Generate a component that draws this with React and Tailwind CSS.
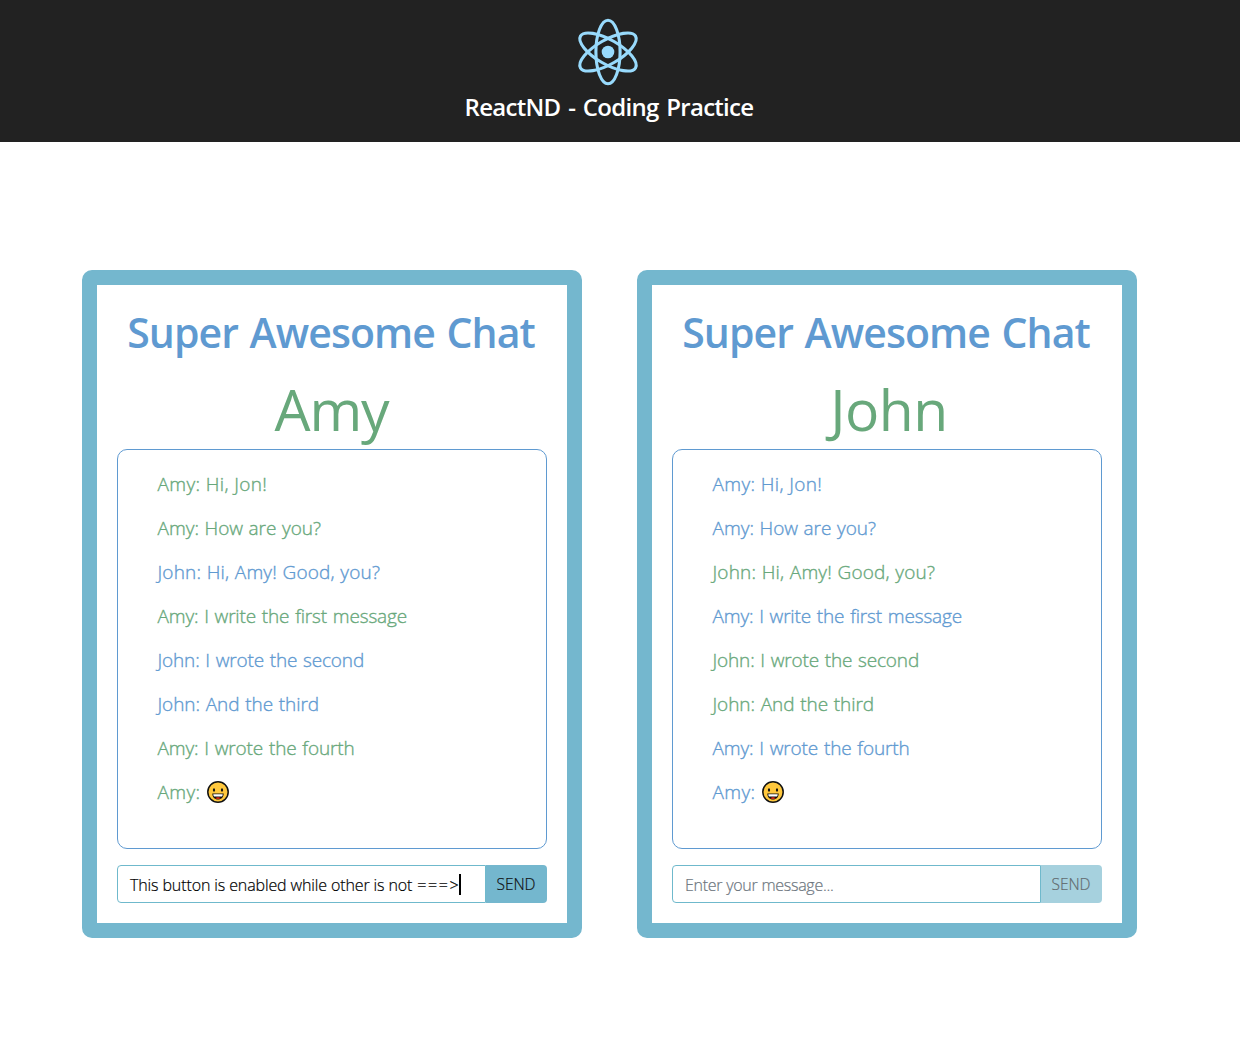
const MESSAGES = [
  { from: "Amy", text: "Hi, Jon!", spacing: "tracking-[0.37px]" },
  { from: "Amy", text: "How are you?", spacing: "tracking-[0.02px] [word-spacing:0.5px]" },
  { from: "John", text: "Hi, Amy! Good, you?", spacing: "tracking-[0.18px] [word-spacing:0.4px]" },
  { from: "Amy", text: "I write the first message", spacing: "tracking-[-0.15px] [word-spacing:1px]" },
  { from: "John", text: "I wrote the second", spacing: "tracking-[-0.14px] [word-spacing:0.9px]" },
  { from: "John", text: "And the third", spacing: "tracking-[-0.07px] [word-spacing:0.9px]" },
  { from: "Amy", text: "I wrote the fourth", spacing: "tracking-[-0.13px] [word-spacing:1px]" },
  { from: "Amy", text: null, spacing: "tracking-[0.4px]" },
];

function Logo() {
  return (
    <svg className="mr-0.5 h-[68px] w-[68px]" viewBox="-34 -34 68 68" fill="none" stroke="#98dafc" strokeWidth="3.1">
      <ellipse rx="12.1" ry="31.8" />
      <ellipse rx="12.1" ry="31.8" transform="rotate(60)" />
      <ellipse rx="12.1" ry="31.8" transform="rotate(-60)" />
      <circle r="6.3" fill="#98dafc" stroke="none" />
    </svg>
  );
}

function Grin() {
  return (
    <svg className="ml-1.5 h-[22px] w-[22px]" viewBox="0 0 22 22" role="img" aria-label="grinning face">
      <circle cx="11" cy="11" r="10.2" fill="#ffc83d" stroke="#111" strokeWidth="1.5" />
      <ellipse cx="7" cy="9" rx="1.1" ry="1.7" fill="#111" />
      <ellipse cx="15" cy="9" rx="1.1" ry="1.7" fill="#111" />
      <path d="M5.3 12.5h11.4c0 3.8-2.4 6-5.7 6s-5.7-2.2-5.7-6z" fill="#111" />
      <path d="M6.3 13.2h9.4c0 1.2-.3 1.8-.7 2.2H7c-.4-.4-.7-1-.7-2.2z" fill="#fff" />
      <path d="M8.5 17.2c1-1.3 4-1.3 5 0-.7.6-1.5.8-2.5.8s-1.8-.2-2.5-.8z" fill="#e02716" />
    </svg>
  );
}

function ChatWindow({ user, draft }) {
  return (
    <section className="flex h-[668px] w-[500px] flex-col rounded-[10px] border-[15px] border-[#74b7ce] px-5">
      <h2 className="mt-[19px] pr-0.5 text-center text-[41px] leading-[57px] font-semibold tracking-[-0.95px] whitespace-nowrap text-[#5f9ad1] [word-spacing:2px]">
        Super Awesome Chat
      </h2>
      <div
        className={`mt-[9px] h-[79px] text-center text-[57px] leading-[79px] font-normal ${
          user === "Amy" ? "pr-px tracking-[-1.1px]" : "pl-1 tracking-[-0.5px]"
        } text-[#68a87b]`}
      >
        {user}
      </div>
      <ul className="h-[400px] rounded-[10px] border border-[#5f9ad1] pt-5 pl-[39.5px] text-[19px] font-light [-webkit-text-stroke:0.35px]">
        {MESSAGES.map((m, i) => (
          <li
            key={i}
            className={`mb-4 flex h-7 items-center leading-7 whitespace-nowrap ${m.spacing} ${
              m.from === user ? "text-[#68a87b]" : "text-[#5f9ad1]"
            }`}
          >
            {m.text ? `${m.from}: ${m.text}` : `${m.from}:`}
            {!m.text && <Grin />}
          </li>
        ))}
      </ul>
      <form className="mt-4 flex h-[38px] font-light [-webkit-text-stroke:0.2px]">
        <div
          className={`flex w-[369px] items-center rounded-l-[4px] border border-[#6fb9cc] pt-px pl-[12px] text-base whitespace-nowrap ${
            draft ? "tracking-[-0.12px] text-black" : "tracking-[-0.27px] text-[#6c757d]"
          }`}
        >
          {draft || "Enter your message..."}
          {draft && (
            <>
              <span className="ml-[5px] tracking-[1.6px]">===&gt;</span>
              <span className="-ml-px mb-px h-[21px] w-[2px] bg-black" />
            </>
          )}
        </div>
        <button
          type="button"
          disabled={!draft}
          className={`w-[61px] rounded-r-[4px] pt-px pr-px text-[15.5px] ${
            draft ? "bg-[#74b7ce] text-[#101010]" : "bg-[#a6d1de] text-[#626b6f]"
          }`}
        >
          SEND
        </button>
      </form>
    </section>
  );
}

export default function App() {
  return (
    <div className="min-h-[1048px] bg-white font-['Open_Sans',sans-serif]">
      <header className="flex h-[142px] flex-col items-center bg-[#222222] pt-[18px] pr-[22px]">
        <Logo />
        <h1 className="mt-1 text-2xl leading-[33px] font-semibold tracking-[-0.72px] text-white [word-spacing:2.2px]">
          ReactND - Coding Practice
        </h1>
      </header>
      <main className="mt-32 flex justify-center gap-[55px] pr-[21px]">
        <ChatWindow user="Amy" draft="This button is enabled while other is not" />
        <ChatWindow user="John" />
      </main>
    </div>
  );
}
